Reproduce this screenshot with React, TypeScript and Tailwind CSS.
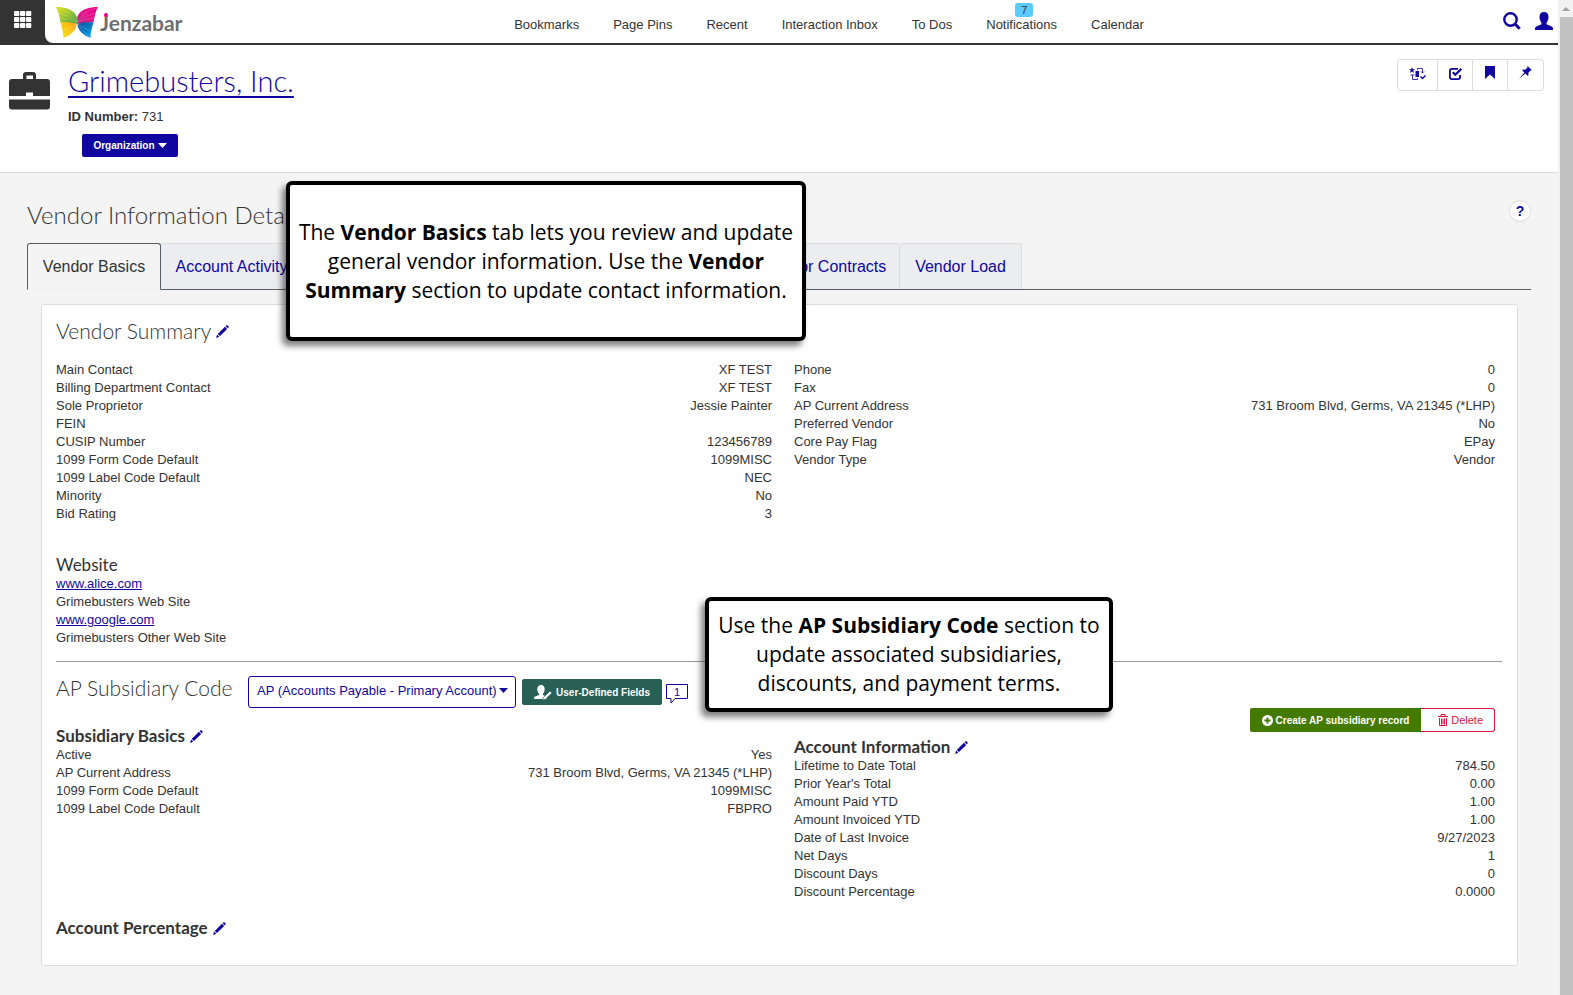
import type { ReactNode } from "react";

type Row = { label: string; value: string };

const contactRows: Row[] = [
  { label: "Main Contact", value: "XF TEST" },
  { label: "Billing Department Contact", value: "XF TEST" },
  { label: "Sole Proprietor", value: "Jessie Painter" },
  { label: "FEIN", value: "" },
  { label: "CUSIP Number", value: "123456789" },
  { label: "1099 Form Code Default", value: "1099MISC" },
  { label: "1099 Label Code Default", value: "NEC" },
  { label: "Minority", value: "No" },
  { label: "Bid Rating", value: "3" },
];

const vendorRows: Row[] = [
  { label: "Phone", value: "0" },
  { label: "Fax", value: "0" },
  { label: "AP Current Address", value: "731 Broom Blvd, Germs, VA 21345 (*LHP)" },
  { label: "Preferred Vendor", value: "No" },
  { label: "Core Pay Flag", value: "EPay" },
  { label: "Vendor Type", value: "Vendor" },
];

const subsidiaryRows: Row[] = [
  { label: "Active", value: "Yes" },
  { label: "AP Current Address", value: "731 Broom Blvd, Germs, VA 21345 (*LHP)" },
  { label: "1099 Form Code Default", value: "1099MISC" },
  { label: "1099 Label Code Default", value: "FBPRO" },
];

const accountRows: Row[] = [
  { label: "Lifetime to Date Total", value: "784.50" },
  { label: "Prior Year's Total", value: "0.00" },
  { label: "Amount Paid YTD", value: "1.00" },
  { label: "Amount Invoiced YTD", value: "1.00" },
  { label: "Date of Last Invoice", value: "9/27/2023" },
  { label: "Net Days", value: "1" },
  { label: "Discount Days", value: "0" },
  { label: "Discount Percentage", value: "0.0000" },
];

const navItems = ["Bookmarks", "Page Pins", "Recent", "Interaction Inbox", "To Dos", "Notifications", "Calendar"];

const Butterfly = () => (
  <svg viewBox="0 0 42 31" className="h-[31px] w-[42px]" aria-hidden="true">
    <defs>
      <linearGradient id="wingGreen" x1="0" y1="0" x2="1" y2="1">
        <stop offset="0" stopColor="#e3e11c" />
        <stop offset="0.5" stopColor="#9cc531" />
        <stop offset="1" stopColor="#3f9a3c" />
      </linearGradient>
      <linearGradient id="wingPink" x1="1" y1="0" x2="0" y2="1">
        <stop offset="0" stopColor="#ec008c" />
        <stop offset="0.6" stopColor="#e0168c" />
        <stop offset="1" stopColor="#b3207f" />
      </linearGradient>
      <linearGradient id="wingYellow" x1="0" y1="1" x2="1" y2="0">
        <stop offset="0" stopColor="#e8e51d" />
        <stop offset="0.6" stopColor="#fdc010" />
        <stop offset="1" stopColor="#f39a1d" />
      </linearGradient>
      <linearGradient id="wingBlue" x1="0" y1="0" x2="1" y2="1">
        <stop offset="0" stopColor="#1b4f9c" />
        <stop offset="0.6" stopColor="#0083ca" />
        <stop offset="1" stopColor="#27b5ea" />
      </linearGradient>
    </defs>
    <path d="M0 0C8 0 18 2 20.800 10V17C16 15.500 10 16 4.500 15.500C3.500 10 2.500 4 0 0Z" fill="url(#wingGreen)" />
    <path d="M42 0C34 0 24 2 21.200 10V17C26 15.500 32 16 37.500 15.500C38.500 10 39.500 4 42 0Z" fill="url(#wingPink)" />
    <path d="M4.500 15.500C11 15 17 15 20.500 17C20.500 23 15 28 7.500 31C7.500 26 6 20 4.500 15.500Z" fill="url(#wingYellow)" />
    <path d="M37.500 15.500C31 15 25 15 21.500 17C21.500 23 27 28 34.500 31C34.500 26 36 20 37.500 15.500Z" fill="url(#wingBlue)" />
    <path d="M20.500 15Q14 4 2 1M20.500 15Q12 8 3 6M20.500 15Q12 12 4 11M21.500 15Q28 4 40 1M21.500 15Q30 8 39 6M21.500 15Q30 12 38 11M20 17Q17 24 9 29M20 17Q14 21 8 24M22 17Q25 24 33 29M22 17Q28 21 34 24" fill="none" stroke="#fff" strokeOpacity="0.35" strokeWidth="0.5" />
  </svg>
);

const GridIcon = () => (
  <svg viewBox="0 0 18 17" className="h-[17px] w-[18px] fill-white" aria-hidden="true">
    {[0, 6, 12].map((y) =>
      [0, 6, 12].map((x) => <rect key={`${x}-${y}`} x={x} y={y} width="5.300" height="5" rx="1" />)
    )}
  </svg>
);

const BriefcaseIcon = () => (
  <svg viewBox="0 0 41 38" className="h-[38px] w-[41px] fill-[#333]" aria-hidden="true">
    <path d="M14 7V3Q14 0 17 0H24Q27 0 27 3V7H38Q41 7 41 10V24H24V20.500H17V24H0V10Q0 7 3 7ZM17.500 7H24V3.500H17.500Z" />
    <path d="M0 27.500H41V34.500Q41 37.500 38 37.500H3Q0 37.500 0 34.500Z" />
  </svg>
);

const SearchIcon = () => (
  <svg viewBox="0 0 18 18" className="size-[18px]" fill="none" stroke="currentColor" aria-hidden="true">
    <circle cx="7.500" cy="7.500" r="6.200" strokeWidth="2.400" />
    <path d="M12 12L16.700 16.700" strokeWidth="3" />
  </svg>
);

const UserIcon = () => (
  <svg viewBox="0 0 18 18" className="size-[18px]" fill="currentColor" aria-hidden="true">
    <path d="M9 0C12 0 13.500 2 13.500 4.700C13.500 7.500 12.500 9.500 11.500 10.700V12.300L16.500 14.500C17.600 15 18 15.800 18 16.800V18H0V16.800C0 15.800 .4 15 1.500 14.500L6.500 12.300V10.700C5.500 9.500 4.500 7.500 4.500 4.700C4.500 2 6 0 9 0Z" />
  </svg>
);

const PencilIcon = () => (
  <svg viewBox="0 0 14 14" className="size-[13px]" fill="currentColor" aria-hidden="true">
    <path d="M10.300 1.300L11.300 .4Q12 0 12.700 .6L13.400 1.300Q14 2 13.500 2.700L12.600 3.600ZM9.600 2L12 4.300L4.300 11.900L1.900 9.600ZM1.300 10.300L3.600 12.600L0 14Z" />
  </svg>
);

const WorkflowIcon = () => (
  <svg viewBox="0 0 17 14" className="h-[14px] w-[17px]" fill="none" stroke="currentColor" aria-hidden="true">
    <path d="M3 0L3.800 2.200H6L4.300 3.600L5 6L3 4.600L1 6L1.700 3.600L0 2.200H2.200Z" fill="currentColor" stroke="none" />
    <rect x="6.500" y="4" width="3.500" height="6" fill="currentColor" stroke="none" />
    <path d="M8.500 3V1.500H13.500V6M12 4.500L13.500 6L15 4.500M1.500 8H5.500M3.500 8V12.500H8.500V11" strokeWidth="0.800" />
    <path d="M11.500 9.500L13.500 11.500L16.500 8.500" strokeWidth="1.500" />
  </svg>
);

const CheckIcon = () => (
  <svg viewBox="0 0 13 13" className="size-[13px]" fill="none" stroke="currentColor" strokeWidth="1.800" aria-hidden="true">
    <path d="M9 1.900H3Q.9 1.900 .9 4V10Q.9 12.100 3 12.100H9Q11.100 12.100 11.100 10V8" />
    <path d="M3.800 5.300L6.300 7.800L12.300 1.800" strokeWidth="2.200" />
  </svg>
);

const BookmarkIcon = () => (
  <svg viewBox="0 0 10 13" className="h-[13px] w-[10px]" fill="currentColor" aria-hidden="true">
    <path d="M0 0H10V13L5 8.500L0 13Z" />
  </svg>
);

const PinIcon = () => (
  <svg viewBox="0 0 13 13" className="size-[13px]" fill="currentColor" aria-hidden="true">
    <path d="M8.500 0L13 4.300L11.500 4.600L9.300 7L9.500 9.500L8.500 9.700L6.300 7.500L0 13L5.400 6.600L3.300 4.500L3.600 3.600L6.200 3.700L8.400 1.500Z" />
  </svg>
);

const UserEditIcon = () => (
  <svg viewBox="0 0 18 15" className="h-[15px] w-[18px]" aria-hidden="true">
    <path d="M7 0C9.500 0 10.700 1.700 10.700 4C10.700 6.200 9.900 7.800 9 8.800V10L13 12V14H0V12.800Q0 12 1 11.500L5 10V8.800C4.100 7.800 3.300 6.200 3.300 4C3.300 1.700 4.500 0 7 0Z" fill="#fff" />
    <path d="M16 6L18 8L11 14.500L8.500 15L9.300 12.500Z" fill="#fff" stroke="#286056" strokeWidth="0.700" />
  </svg>
);

const PlusIcon = () => (
  <svg viewBox="0 0 11 11" className="size-[11px]" aria-hidden="true">
    <circle cx="5.500" cy="5.500" r="5.500" fill="#fff" />
    <path d="M5.500 2.500V8.500M2.500 5.500H8.500" stroke="#457a00" strokeWidth="1.800" />
  </svg>
);

const TrashIcon = () => (
  <svg viewBox="0 0 10 12" className="h-[12px] w-[10px]" fill="none" stroke="currentColor" aria-hidden="true">
    <path d="M0 2.500H10M3 2.500V.5H7V2.500M1.500 4V11.500H8.500V4M3.500 4.500V10.500M5 4.500V10.500M6.500 4.500V10.500" />
  </svg>
);

const Caret = () => (
  <svg viewBox="0 0 9 5" className="h-[5px] w-[9px]" fill="currentColor" aria-hidden="true">
    <path d="M0 0H9L4.500 5Z" />
  </svg>
);

const EditButton = ({ label }: { label: string }) => (
  <button type="button" aria-label={label} className="pt-px text-[#10069f]">
    <PencilIcon />
  </button>
);

const Rows = ({ rows }: { rows: Row[] }) => (
  <dl className="leading-[18px]">
    {rows.map((row) => (
      <div key={row.label} className="flex h-[18px] justify-between">
        <dt>{row.label}</dt>
        <dd>{row.value}</dd>
      </div>
    ))}
  </dl>
);

const SubHeading = ({ children }: { children: string }) => (
  <div className="flex h-5 items-center gap-[5px]">
    <h3 className="font-[Lato,sans-serif] text-[17px] leading-5 font-bold">{children}</h3>
    <EditButton label={`Edit ${children}`} />
  </div>
);

const Callout = ({ className, children }: { className: string; children: ReactNode }) => (
  <div
    className={`absolute flex items-center justify-center rounded-md border-4 border-black bg-white text-center font-['Open_Sans',sans-serif] text-[21px] leading-[29px] whitespace-nowrap text-black shadow-[-4px_5px_6px_rgba(0,0,0,0.5)] ${className}`}
  >
    <p>{children}</p>
  </div>
);

const TopBar = () => (
  <header className="flex h-[45px] border-b-2 border-[#333] bg-[#333]">
    <button type="button" aria-label="Applications" className="flex w-[45px] shrink-0 justify-center pt-[11px]">
      <GridIcon />
    </button>
    <div className="flex flex-1 rounded-bl-lg bg-white">
      <a href="#" className="flex w-[145px] shrink-0 gap-[2px] pt-[7px] pl-[11px]">
        <Butterfly />
        <span className="relative font-[Lato,sans-serif] text-[21px] leading-8 font-bold text-[#6d6e71]">
          Jenzabar
          <span className="absolute top-[6px] left-1 size-[4px] rounded-full bg-[#ec008c]" />
        </span>
      </a>
      <nav className="flex flex-1 justify-center gap-[34px] pt-4">
        {navItems.map((item) => (
          <a key={item} href="#" className="relative leading-[18px]">
            {item === "Notifications" && (
              <span className="absolute -top-[13px] left-[29px] h-[14px] w-[18px] rounded-[3px] bg-[#5bcbff] text-center text-[11px] leading-[14px]">
                7
              </span>
            )}
            {item}
          </a>
        ))}
      </nav>
      <div className="flex w-[90px] shrink-0 justify-end gap-[14px] pt-3 pr-[5px] text-[#10069f]">
        <button type="button" aria-label="Search" className="h-[18px]">
          <SearchIcon />
        </button>
        <button type="button" aria-label="Account" className="h-[18px]">
          <UserIcon />
        </button>
      </div>
    </div>
  </header>
);

const VendorHeader = () => (
  <section className="flex h-[128px] border-b border-[#ddd] bg-white pl-[9px]">
    <div className="w-[59px] pt-[27px]">
      <BriefcaseIcon />
    </div>
    <div className="flex-1 pt-4">
      <h1 className="font-[Lato,sans-serif] text-[29px] leading-10 font-light">
        <a href="#" className="text-[#10069f] underline decoration-2 underline-offset-4">
          Grimebusters, Inc.
        </a>
      </h1>
      <p className="mt-[7px] leading-[18px]">
        <b>ID Number:</b> 731
      </p>
      <button
        type="button"
        aria-haspopup="menu"
        className="mt-2 ml-[14px] flex h-[23px] w-24 items-center justify-center gap-[3px] rounded-xs bg-[#10069f] text-[10px] font-bold text-white"
      >
        Organization
        <Caret />
      </button>
    </div>
    <div className="mt-[14px] mr-[14px] flex h-8 divide-x divide-[#ddd] rounded-[3px] border border-[#ddd] text-[#10069f]">
      <button type="button" aria-label="Workflow" className="flex w-10 justify-center pt-[7px]">
        <WorkflowIcon />
      </button>
      <button type="button" aria-label="Tasks" className="flex w-[35px] justify-center pt-[7px]">
        <CheckIcon />
      </button>
      <button type="button" aria-label="Bookmark" className="flex w-[35px] justify-center pt-[6px]">
        <BookmarkIcon />
      </button>
      <button type="button" aria-label="Pin" className="flex w-[35px] justify-center pt-[6px]">
        <PinIcon />
      </button>
    </div>
  </section>
);

const Tabs = () => (
  <div role="tablist" className="flex h-[47px] border-b border-[#555e66] text-base text-[#10069f]">
    <button
      type="button"
      role="tab"
      aria-selected="true"
      className="-mb-px w-[134px] rounded-t-[3px] border border-[#555e66] border-b-[#eee] bg-[#f4f4f4] text-[#333]"
    >
      Vendor Basics
    </button>
    <button type="button" role="tab" className="w-[142px] rounded-t-[3px] border border-b-0 border-l-0 border-[#ddd] bg-[#ecedf1]">
      Account Activity
    </button>
    <div className="w-[446px] border-t border-[#ddd] bg-[#ecedf1]" />
    <button type="button" role="tab" className="w-[151px] rounded-t-[3px] border border-b-0 border-[#ddd] bg-[#ecedf1]">
      Vendor Contracts
    </button>
    <button type="button" role="tab" className="w-[122px] rounded-t-[3px] border border-b-0 border-l-0 border-[#ddd] bg-[#ecedf1]">
      Vendor Load
    </button>
  </div>
);

const VendorSummary = () => (
  <section className="border-b border-[#999] pb-[14px]">
    <div className="flex h-6 items-center gap-[5px]">
      <h2 className="font-[Lato,sans-serif] text-[21px] leading-6 font-light">Vendor Summary</h2>
      <EditButton label="Edit Vendor Summary" />
    </div>
    <div className="mt-[18px] grid grid-cols-2">
      <div className="pr-[7px]">
        <Rows rows={contactRows} />
      </div>
      <div className="pr-[7px] pl-[15px]">
        <Rows rows={vendorRows} />
      </div>
    </div>
    <h3 className="mt-8 font-[Lato,sans-serif] text-[17px] leading-5">Website</h3>
    <div className="leading-[18px]">
      <a href="#" className="text-[#10069f] underline">www.alice.com</a>
      <p>Grimebusters Web Site</p>
      <a href="#" className="text-[#10069f] underline">www.google.com</a>
      <p>Grimebusters Other Web Site</p>
    </div>
  </section>
);

const SubsidiarySection = () => (
  <section>
    <div className="flex h-[46px] items-start pt-[14px]">
      <h2 className="w-[192px] font-[Lato,sans-serif] text-[21px] leading-6 font-light">AP Subsidiary Code</h2>
      <div className="relative w-[268px] text-[#10069f]">
        <select
          aria-label="AP Subsidiary Code"
          className="h-8 w-full appearance-none rounded-[3px] border border-[#10069f] bg-white pb-[3px] pl-2"
        >
          <option>AP (Accounts Payable - Primary Account)</option>
        </select>
        <span className="pointer-events-none absolute top-3 right-2">
          <Caret />
        </span>
      </div>
      <button
        type="button"
        className="mt-[3px] ml-[6px] flex h-[26px] w-[140px] items-center justify-center gap-1 rounded-xs bg-[#286056] text-[10px] font-bold text-white"
      >
        <UserEditIcon />
        User-Defined Fields
      </button>
      <button type="button" aria-label="1 comment" className="relative mt-2 ml-1 h-5 w-[22px] text-[11px] leading-4 text-[#10069f]">
        <svg viewBox="0 0 22 20" className="absolute inset-0 h-5 w-[22px]" fill="none" stroke="currentColor" aria-hidden="true">
          <path d="M.5 .5H21.500V14.500H9L5 19V14.500H.5Z" />
        </svg>
        <span className="absolute inset-x-0 top-0">1</span>
      </button>
    </div>
    <div className="grid grid-cols-2">
      <div className="pt-[18px] pr-[7px]">
        <SubHeading>Subsidiary Basics</SubHeading>
        <Rows rows={subsidiaryRows} />
      </div>
      <div className="pr-[7px] pl-[15px]">
        <div className="flex justify-end">
          <button
            type="button"
            className="flex h-6 w-[171px] items-center justify-center gap-[3px] rounded-l-xs bg-[#457a00] text-[10px] font-bold text-white"
          >
            <PlusIcon />
            Create AP subsidiary record
          </button>
          <button
            type="button"
            className="flex h-6 w-[74px] items-center justify-end gap-[3px] rounded-r-[3px] border border-l-0 border-[#dc143c] pr-[11px] text-[11px] text-[#dc143c]"
          >
            <TrashIcon />
            Delete
          </button>
        </div>
        <div className="mt-[5px]">
          <SubHeading>Account Information</SubHeading>
          <Rows rows={accountRows} />
        </div>
      </div>
    </div>
    <div className="mt-[17px]">
      <SubHeading>Account Percentage</SubHeading>
    </div>
  </section>
);

const Scrollbar = () => (
  <div className="w-[15px] shrink-0 bg-[#f1f1f1]">
    <div className="flex h-[17px] items-center justify-center">
      <svg viewBox="0 0 8 4" className="h-1 w-2 fill-[#a3a3a3]" aria-hidden="true">
        <path d="M4 0L8 4H0Z" />
      </svg>
    </div>
    <div className="ml-[2px] h-full bg-[#c1c1c1]" />
  </div>
);

export default function App() {
  return (
    <div className="relative flex min-h-screen overflow-hidden bg-[#f4f4f4] font-['Liberation_Sans',sans-serif] text-[13px] text-[#333]">
      <div className="min-w-0 flex-1">
        <TopBar />
        <VendorHeader />
        <main className="pt-6 pr-[27px] pb-7 pl-[27px]">
          <div className="flex h-[46px] items-start justify-between">
            <h2 className="pt-1 font-[Lato,sans-serif] text-2xl leading-7 font-light">Vendor Information Details</h2>
            <button
              type="button"
              aria-label="Help"
              className="mt-[3px] size-[22px] rounded-full border border-[#ddd] bg-white text-sm leading-5 font-bold text-[#10069f]"
            >
              ?
            </button>
          </div>
          <Tabs />
          <div className="mt-[14px] mr-[13px] ml-[14px] rounded-[3px] border border-[#ddd] bg-white pt-[14px] pr-[15px] pb-[27px] pl-[14px]">
            <VendorSummary />
            <SubsidiarySection />
          </div>
        </main>
      </div>
      <Scrollbar />
      <Callout className="top-[181px] left-[286px] h-[160px] w-[520px]">
        The <b>Vendor Basics</b> tab lets you review and update
        <br />
        general vendor information. Use the <b>Vendor</b>
        <br />
        <b>Summary</b> section to update contact information.
      </Callout>
      <Callout className="top-[597px] left-[705px] h-[115px] w-[408px]">
        Use the <b>AP Subsidiary Code</b> section to
        <br />
        update associated subsidiaries,
        <br />
        discounts, and payment terms.
      </Callout>
    </div>
  );
}
